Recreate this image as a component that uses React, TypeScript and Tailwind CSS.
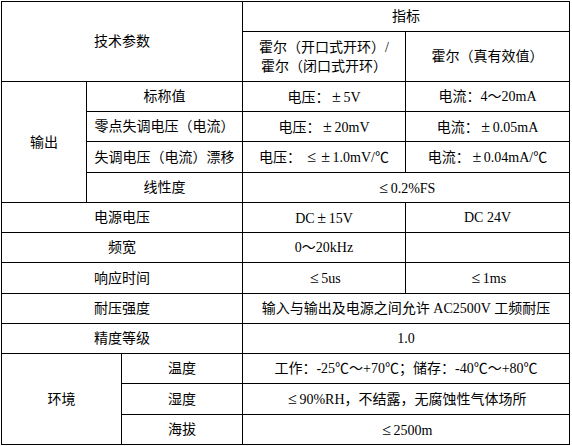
const cell = 'border border-black text-center align-middle p-0'

// SimSun-style full-width symbols (±, ≤) in the original
const W = ({ c }: { c: string }) => (
  <span className="inline-block w-[14px] text-center text-[16px] leading-[19px]">{c}</span>
)

export default function App() {
  return (
    <div className="bg-white w-[572px] h-[446px] pt-px pl-px">
      <table className="border-collapse table-fixed w-[568px] text-[14px] leading-[19px] text-black font-['Liberation_Serif','Noto_Sans_CJK_SC',serif]">
        <colgroup>
          <col className="w-[85px]" />
          <col className="w-[35px]" />
          <col className="w-[121px]" />
          <col className="w-[163px]" />
          <col className="w-[164px]" />
        </colgroup>
        <tbody>
          <tr className="h-[30px]">
            <td className={cell} colSpan={3} rowSpan={2}>技术参数</td>
            <td className={cell} colSpan={2}>指标</td>
          </tr>
          <tr className="h-[50px]">
            <td className={cell}>
              霍尔（开口式开环）/
              <br />
              霍尔（闭口式开环）
            </td>
            <td className={cell}>霍尔（真有效值）</td>
          </tr>
          <tr className="h-[30px]">
            <td className={cell} rowSpan={4}>输出</td>
            <td className={cell} colSpan={2}>标称值</td>
            <td className={cell}>电压：<W c="±" />5V</td>
            <td className={cell}>电流：4～20mA</td>
          </tr>
          <tr className="h-[30px]">
            <td className={cell} colSpan={2}>零点失调电压（电流）</td>
            <td className={cell}>电压：<W c="±" />20mV</td>
            <td className={cell}>电流：<W c="±" />0.05mA</td>
          </tr>
          <tr className="h-[31px]">
            <td className={cell} colSpan={2}>失调电压（电流）漂移</td>
            <td className={cell}>电压： <W c="≤" /><W c="±" />1.0mV/℃</td>
            <td className={cell}>电流：<W c="±" />0.04mA/℃</td>
          </tr>
          <tr className="h-[30px]">
            <td className={cell} colSpan={2}>线性度</td>
            <td className={cell} colSpan={2}><W c="≤" />0.2%FS</td>
          </tr>
          <tr className="h-[30px]">
            <td className={cell} colSpan={3}>电源电压</td>
            <td className={cell}>DC<W c="±" />15V</td>
            <td className={cell}>DC 24V</td>
          </tr>
          <tr className="h-[30px]">
            <td className={cell} colSpan={3}>频宽</td>
            <td className={cell}>0～20kHz</td>
            <td className={cell}></td>
          </tr>
          <tr className="h-[31px]">
            <td className={cell} colSpan={3}>响应时间</td>
            <td className={cell}><W c="≤" />5us</td>
            <td className={cell}><W c="≤" />1ms</td>
          </tr>
          <tr className="h-[30px]">
            <td className={cell} colSpan={3}>耐压强度</td>
            <td className={cell} colSpan={2}>输入与输出及电源之间允许 AC2500V 工频耐压</td>
          </tr>
          <tr className="h-[30px]">
            <td className={cell} colSpan={3}>精度等级</td>
            <td className={cell} colSpan={2}>1.0</td>
          </tr>
          <tr className="h-[30px]">
            <td className={cell} colSpan={2} rowSpan={3}>环境</td>
            <td className={cell}>温度</td>
            <td className={cell} colSpan={2}>工作：-25℃～+70℃；储存：-40℃～+80℃</td>
          </tr>
          <tr className="h-[31px]">
            <td className={cell}>湿度</td>
            <td className={cell} colSpan={2}><W c="≤" />90%RH，不结露，无腐蚀性气体场所</td>
          </tr>
          <tr className="h-[30px]">
            <td className={cell}>海拔</td>
            <td className={cell} colSpan={2}><W c="≤" />2500m</td>
          </tr>
        </tbody>
      </table>
    </div>
  )
}
